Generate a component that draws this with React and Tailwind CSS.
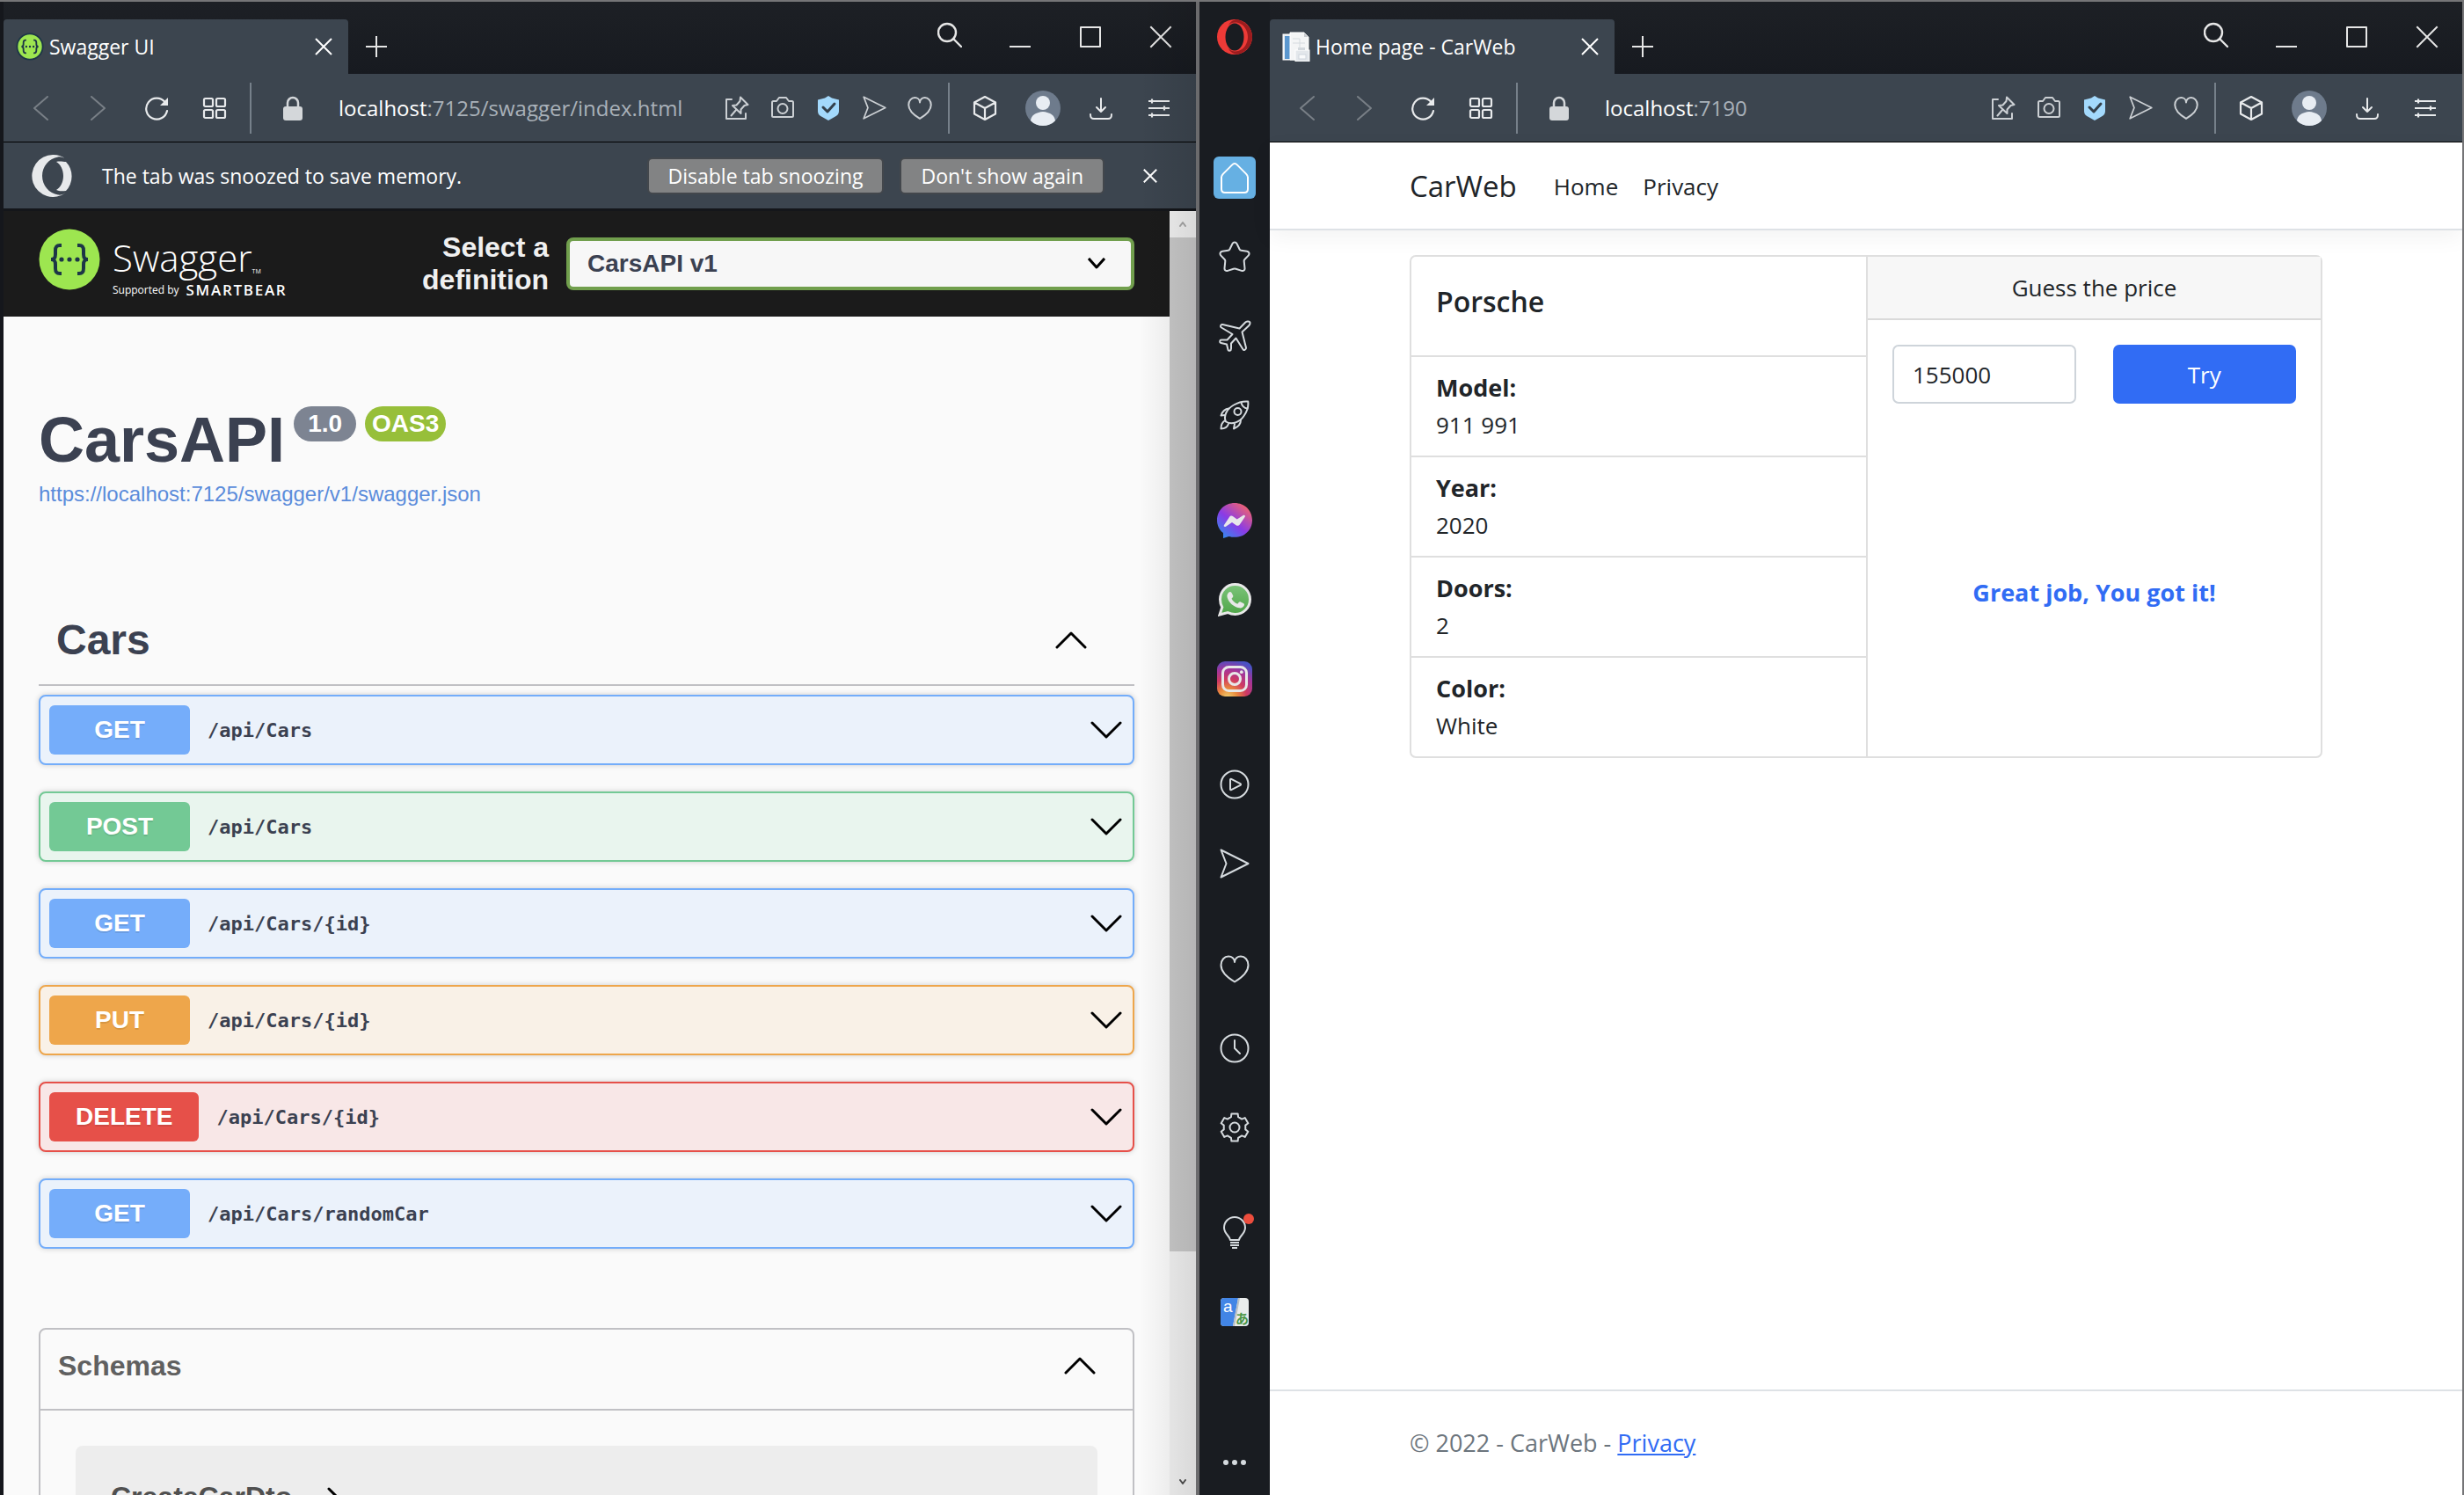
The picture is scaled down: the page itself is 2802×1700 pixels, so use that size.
import React from "react";

const UI = "font-['Open_Sans','Noto_Sans',sans-serif]";
const ARIAL = "font-['Liberation_Sans',Arial,sans-serif]";

function Svg({ w, h, vb, children, sw = 2, stroke = "currentColor", fill = "none" }) {
  return (
    <svg
      width={w}
      height={h || w}
      viewBox={vb || `0 0 ${w} ${h || w}`}
      fill={fill}
      stroke={stroke}
      strokeWidth={sw}
      strokeLinecap="round"
      strokeLinejoin="round"
      aria-hidden="true"
      className="shrink-0"
    >
      {children}
    </svg>
  );
}

/* ---------- shared drawings ---------- */

const Cross = ({ size = 20, sw = 2 }) => (
  <Svg w={size} vb="0 0 20 20" sw={sw}>
    <path d="M1 1l18 18M19 1L1 19" strokeLinecap="butt" />
  </Svg>
);

const SwaggerMark = ({ size, ring }) => (
  <svg width={size} height={size} viewBox="0 0 70 70" aria-hidden="true" className="shrink-0">
    <circle cx="35" cy="35" r={ring ? 32 : 34.5} fill="#9de650" stroke="#1d3647" strokeWidth={ring ? 4 : 0} />
    <g fill="none" stroke="#1d3647" strokeWidth="4">
      <path d="M26 19h-2c-4 0-5 2-5 6v4c0 4-1 6-5 6 4 0 5 2 5 6v4c0 4 1 6 5 6h2" />
      <path d="M44 19h2c4 0 5 2 5 6v4c0 4 1 6 5 6-4 0-5 2-5 6v4c0 4-1 6-5 6h-2" />
    </g>
    <g fill="#1d3647">
      <circle cx="26" cy="35" r="2.6" />
      <circle cx="35" cy="35" r="2.6" />
      <circle cx="44" cy="35" r="2.6" />
    </g>
  </svg>
);

const PageIcon = () => (
  <svg width="32" height="34" viewBox="0 0 32 34" aria-hidden="true" className="shrink-0">
    <rect x="1" y="3" width="18" height="29" fill="#e9eef3" stroke="#fff" />
    <rect x="3" y="5" width="6" height="26" fill="#5b97cf" />
    <path d="M9 1h16l5 5v26H9z" fill="#f4f5f6" stroke="#fff" />
    <path d="M25 1v5h5" fill="#c9ccd0" />
    <path d="M12 8h8M12 13h14M20 8v18" stroke="#d5dadf" fill="none" />
    <rect x="15" y="21" width="16" height="13" fill="#e3e7eb" stroke="#fff" />
    <rect x="18" y="18" width="8" height="3" fill="#d3d8dd" />
    <rect x="19" y="26" width="8" height="5" fill="#f9fafb" stroke="#cfd6dd" />
  </svg>
);

const Send = ({ size = 28, sw = 2 }) => (
  <Svg w={size} vb="0 0 34 34" sw={sw}>
    <path d="M1.500 1.500L32.500 17 1.500 32.500 7.500 17z" />
  </Svg>
);

const Heart = ({ size = 28, sw = 2 }) => (
  <Svg w={size} vb="0 0 34 34" sw={sw}>
    <path d="M17 31.500C12 28.500 1.500 21 1.500 12.500 1.500 6.500 5.500 2.500 10 2.500c3.600 0 7 2.300 7 6.500 0-4.200 3.400-6.500 7-6.500 4.500 0 8.500 4 8.500 10C32.500 21 22 28.500 17 31.500z" />
  </Svg>
);

const Chevron = ({ up }) => (
  <Svg w={36} h={20} sw={3} stroke="#000">
    <path d={up ? "M2 18L18 2 34 18" : "M2 2L18 18 34 2"} />
  </Svg>
);

/* ---------- browser chrome ---------- */

function WindowButtons() {
  const cls = "flex h-full w-20 items-center justify-center";
  return (
    <div className="flex h-20 text-[#e6e6e6]">
      <button aria-label="Search tabs" className={cls}>
        <Svg w={28} h={34} sw={2.4}>
          <circle cx="11" cy="12" r="10" />
          <path d="M18 19l9 9" />
        </Svg>
      </button>
      <button aria-label="Minimize" className={cls}>
        <Svg w={24}><path d="M0 23h24" strokeLinecap="butt" /></Svg>
      </button>
      <button aria-label="Maximize" className={cls}>
        <Svg w={24}><rect x="1" y="1" width="22" height="22" /></Svg>
      </button>
      <button aria-label="Close window" className={cls}><Cross size={26} sw={1.5} /></button>
    </div>
  );
}

function TitleBar({ icon, title }) {
  return (
    <div className="flex h-[82px] justify-between bg-linear-to-b from-[#1d2025] to-[#171a20]">
      <div className="flex pt-5">
        <div className={`flex w-[392px] items-center rounded-t-sm bg-[#3c454f] pl-[14px] pr-[18px] text-[23px] text-white ${UI}`}>
          {icon}
          <span className="ml-[6px] flex-1 whitespace-nowrap">{title}</span>
          <button aria-label="Close tab"><Cross size={20} /></button>
        </div>
        <button aria-label="New tab" className="flex w-16 items-center justify-center text-[#e6e6e6]">
          <Svg w={24}><path d="M12 0v24M0 12h24" strokeLinecap="butt" /></Svg>
        </button>
      </div>
      <WindowButtons />
    </div>
  );
}

function Tool({ label, small, dim, children }) {
  return (
    <button
      aria-label={label}
      className={`flex h-full items-center justify-center ${small ? "w-[52px] text-[#ccd0d4]" : "w-[66px] text-[#e8eaec]"} ${dim ? "opacity-35" : ""}`}
    >
      {children}
    </button>
  );
}

function Toolbar({ host, rest }) {
  return (
    <div className="flex h-[78px] items-center border-b border-black bg-[#3c454f] px-[9px]">
      <Tool label="Back" dim>
        <Svg w={18} h={28}><path d="M17 1L2 14l15 13" /></Svg>
      </Tool>
      <Tool label="Forward" dim>
        <Svg w={18} h={28}><path d="M1 1l15 13L1 27" /></Svg>
      </Tool>
      <Tool label="Reload">
        <Svg w={28} sw={2.2}>
          <path d="M23.500 7A12 12 0 1 0 26 17" />
          <path d="M27 2v9h-9z" fill="currentColor" stroke="none" />
        </Svg>
      </Tool>
      <Tool label="Speed dial">
        <Svg w={28} sw={2.2}>
          <rect x="2" y="3" width="10" height="9" rx="1.500" />
          <rect x="16" y="3" width="10" height="9" rx="1.500" />
          <rect x="2" y="16" width="10" height="9" rx="1.500" />
          <rect x="16" y="16" width="10" height="9" rx="1.500" />
        </Svg>
      </Tool>
      <span className="mx-[7px] h-[58px] w-[2px] bg-[#76808a]" />
      <span className="ml-6 text-[#d4d7da]">
        <Svg w={32} h={28}>
          <path d="M10 13V8a6 6 0 0 1 12 0v5" strokeWidth="2.500" />
          <rect x="5" y="12" width="22" height="16" rx="3" fill="currentColor" stroke="none" />
        </Svg>
      </span>
      <div className={`ml-9 flex-1 whitespace-nowrap text-2xl text-[#a9b1b9] ${UI}`}>
        <span className="text-white">{host}</span>{rest}
      </div>
      <Tool label="Pin page" small>
        <Svg w={28}>
          <path d="M8 4H2v22h22v-6" />
          <path d="M18 1.500l8.500 8.500-4 1-4 4.500v4.500l-9.500-9 4.500-.5 4-4.500zM13.500 15.500l-6 7" />
        </Svg>
      </Tool>
      <Tool label="Snapshot" small>
        <Svg w={28}>
          <path d="M3.500 6H7l3-4h8l3 4h3.500c1 0 1.500.5 1.500 1.500v15c0 1-.5 1.500-1.500 1.500h-21c-1 0-1.500-.5-1.500-1.500v-15C2 6.500 2.500 6 3.500 6z" />
          <circle cx="14" cy="14.500" r="5.500" />
        </Svg>
      </Tool>
      <Tool label="Ad blocker" small>
        <Svg w={28}>
          <path d="M14 0l4 2.500 8 2V17c0 3-1 5-5 7l-7 4-7-4c-4-2-5-4-5-7V4.500l8-2z" fill="#a3d9fc" stroke="none" />
          <path d="M8 13l5 5 8-9" stroke="#34404b" strokeWidth="3" />
        </Svg>
      </Tool>
      <Tool label="My Flow" small><Send size={27} sw={2.2} /></Tool>
      <Tool label="Bookmark" small><Heart size={28} sw={2.4} /></Tool>
      <span className="ml-[6px] mr-[7px] h-[58px] w-[2px] bg-[#76808a]" />
      <Tool label="Extensions">
        <Svg w={28} sw={2.2}>
          <path d="M14 1l12 6.500v13L14 27 2 20.500v-13zM2 7.500L14 14l12-6.500M14 14v13" />
        </Svg>
      </Tool>
      <Tool label="Profile">
        <svg width="40" height="40" viewBox="0 0 40 40" aria-hidden="true">
          <clipPath id="face"><circle cx="20" cy="20" r="20" /></clipPath>
          <circle cx="20" cy="20" r="20" fill="#6e7b8c" />
          <g clipPath="url(#face)" fill="#e8edf3">
            <circle cx="20" cy="14" r="8" />
            <path d="M6 34c1-6 5-8 9-9 3-1.500 7-1.500 10 0 4 1 8 3 9 9l-4 6H10z" />
          </g>
        </svg>
      </Tool>
      <Tool label="Downloads">
        <Svg w={28}>
          <path d="M14 3v15M9 13l5 5 5-5M2 21c0 4 1 5 4 5h16c3 0 4-1 4-5" />
        </Svg>
      </Tool>
      <Tool label="Easy setup">
        <Svg w={26} sw={2.2}>
          <path d="M1 5h24M1 13h24M1 21h24M5 2.500v5M19 10.500v5M5 18.500v5" strokeLinecap="butt" />
        </Svg>
      </Tool>
    </div>
  );
}

/* ---------- sidebar ---------- */

const gearPath = (() => {
  const pts = [];
  for (let k = 0; k < 6; k++) {
    const c = -90 + k * 60;
    [[-19, 12.5], [-13, 16], [13, 16], [19, 12.5]].forEach(([d, r]) => {
      const a = ((c + d) * Math.PI) / 180;
      pts.push(`${(18 + r * Math.cos(a)).toFixed(2)} ${(18 + r * Math.sin(a)).toFixed(2)}`);
    });
  }
  return `M${pts.join("L")}z`;
})();

const sideGroups = [
  [
    ["Start page", (
      <span className="flex size-12 items-center justify-center rounded-md bg-[#66b0e3] text-white">
        <Svg w={34} h={36} sw={2}>
          <path d="M17 2c1 0 2 .6 3 1.600l10 10c1.300 1.300 2 2.400 2 4V31c0 2.400-1.600 4-4 4H6c-2.400 0-4-1.600-4-4V17.600c0-1.600.7-2.700 2-4l10-10C15 2.600 16 2 17 2z" />
        </Svg>
      </span>
    )],
    ["Bookmarks", (
      <Svg w={36}>
        <path d="M18 1.500c1.200 0 2 .6 2.600 1.700l3 6.300c.4.800 1 1.200 1.800 1.300l6.600 1c2.500.4 3.300 3 1.600 4.800L29.400 21c-.6.600-.8 1.300-.7 2.100l.8 7.900c.2 2.300-1.600 3.600-3.600 2.900l-6.500-2.200c-1-.3-1.800-.3-2.800 0l-6.500 2.200c-2 .7-3.800-.6-3.600-2.900l.8-7.900c.1-.8-.1-1.500-.7-2.100l-4.200-4.400C.7 14.800 1.500 12.200 4 11.800l6.600-1c.8-.1 1.400-.5 1.800-1.300l3-6.300c.6-1.100 1.400-1.700 2.600-1.700z" />
      </Svg>
    )],
    ["Travel", (
      <Svg w={38} vb="-1 -1 38 38">
        <path d="M23.500 9.500L30 2.800C31.500 1.300 34 1 35 2 36 3 35.600 5 34 6.500L26.500 13.500 31 31.500C31.300 33.300 28.500 35 27.500 33.300L19.500 20.500 14 26.500 14 32.500C14 35 11 35.700 10.500 33.700L9 27.500 2.500 26C.5 25.500.8 22.500 3 22.500L9.500 22.500 15.500 16 3 8.500C1 7.300 2.300 4.500 4.300 5z" />
      </Svg>
    )],
    ["Explore", (
      <Svg w={34}>
        <path d="M7 24.500C4 18 8 10 16 5.500 21 2.500 27 1 32.200 1.500 33 7 31 13 27.500 18 23 25 14 28.500 7 24.500z" />
        <circle cx="20.500" cy="13" r="4" />
        <path d="M24.500 3C25.500 7 28 9 31.500 9.500M10.500 9.500C6 10 3 13 1.500 17.500L6 17M24 22.500C24 27 21 30.500 16 32.500L17 27M5.500 23.500C2.500 25.500 1.500 29 1.500 32.500 5 32.500 8.500 31.500 10 27" />
      </Svg>
    )],
  ],
  [
    ["Messenger", (
      <svg width="40" height="40" viewBox="0 0 40 40" aria-hidden="true">
        <defs>
          <linearGradient id="msg" x1="0" y1="1" x2="0.800" y2="0">
            <stop offset="0" stopColor="#1f9bf0" />
            <stop offset=".5" stopColor="#8a3be6" />
            <stop offset="1" stopColor="#f5656a" />
          </linearGradient>
        </defs>
        <path d="M20 0c11.400 0 20 8.300 20 19.400S31.400 38.800 20 38.800c-2.500 0-4.500-.4-6.500-.9L7 40v-6C2.600 30.500 0 25.400 0 19.400 0 8.300 8.600 0 20 0z" fill="url(#msg)" />
        <path d="M8 25l6-9c1-1.500 2.800-1.800 4.200-.8l4.500 3.400 7-4.600c1.500-.8 2.800.4 2 1.800l-5.900 8.600c-1 1.500-2.800 1.800-4.200.8L17 22l-7 4.700c-1.500.8-2.900-.3-2-1.700z" fill="#e8e8ea" />
      </svg>
    )],
    ["WhatsApp", (
      <svg width="38" height="38" viewBox="0 0 38 38" aria-hidden="true">
        <defs>
          <linearGradient id="wa" x1="0" y1="0" x2="0" y2="1">
            <stop offset="0" stopColor="#7cc47a" />
            <stop offset="1" stopColor="#4fa548" />
          </linearGradient>
        </defs>
        <path d="M19.500 1.500C29 1.500 36.500 9 36.500 18.500S29 35.500 19.500 35.500c-3 0-6-.8-8.300-2L2 36l2.800-8.500c-1.500-2.700-2.300-5.700-2.300-9C2.500 9 10 1.500 19.500 1.500z" fill="url(#wa)" stroke="#e8e8e8" strokeWidth="3" />
        <path d="M12.500 10.500c.8-.8 2.400-.7 3 .4l1.700 3.400c.3.8.1 1.400-.4 2l-1.300 1.500c1.500 2.800 3.700 4.700 6.800 6l1.600-2c.5-.6 1.200-.7 1.900-.4l3.200 1.600c1 .5 1.200 1.300.9 2.300-.8 2.300-3.300 3.500-5.700 3-6.500-1.400-11.600-5.600-13.500-11.800-.8-2.400.1-4.500 1.800-6z" fill="#e8e8e8" />
      </svg>
    )],
    ["Instagram", (
      <svg width="40" height="40" viewBox="0 0 40 40" aria-hidden="true">
        <defs>
          <radialGradient id="ig" cx=".3" cy="1.050" r="1.100">
            <stop offset="0" stopColor="#efd574" />
            <stop offset=".25" stopColor="#ea8a3c" />
            <stop offset=".5" stopColor="#cf3a62" />
            <stop offset=".75" stopColor="#a3359a" />
            <stop offset="1" stopColor="#4a52c4" />
          </radialGradient>
        </defs>
        <rect width="40" height="40" rx="9" fill="url(#ig)" />
        <g fill="none" stroke="#e8e8e8" strokeWidth="3">
          <rect x="6.500" y="6.500" width="27" height="27" rx="7" />
          <circle cx="20" cy="20" r="6.500" />
        </g>
        <circle cx="27.800" cy="12.200" r="1.900" fill="#e8e8e8" />
      </svg>
    )],
  ],
  [
    ["Player", (
      <Svg w={34}>
        <circle cx="17" cy="17" r="15.500" />
        <path d="M12 11.500v11c0 .7.600 1 1.200.7l10.300-5.400c.7-.4.700-1.200 0-1.600l-10.300-5.400c-.6-.3-1.200 0-1.200.7z" />
      </Svg>
    )],
    ["My Flow", <Send size={34} sw={2} />],
  ],
  [
    ["Favorites", <Heart size={34} sw={2} />],
    ["History", (
      <Svg w={34}>
        <circle cx="17" cy="17" r="15.500" />
        <path d="M17 8v9l6 6" />
      </Svg>
    )],
    ["Settings", (
      <Svg w={36}>
        <path d={gearPath} />
        <circle cx="18" cy="18" r="5.500" />
      </Svg>
    )],
  ],
  [
    ["Tips", (
      <svg width="44" height="44" viewBox="0 0 44 44" fill="none" stroke="currentColor" strokeWidth="2" aria-hidden="true">
        <path d="M17 30c0-4-7-7-7-14a12 12 0 0 1 24 0c0 7-7 10-7 14z" strokeLinejoin="round" />
        <path d="M17 33h10M17 36h10M19 39h6" />
        <circle cx="38" cy="6" r="6" fill="#ed4d3d" stroke="none" />
      </svg>
    )],
    ["Translate", (
      <span className="relative flex size-8 overflow-hidden rounded-[4px] bg-[#e9ecec]">
        <svg width="32" height="32" viewBox="0 0 32 32" aria-hidden="true">
          <path d="M0 0h20l-6 32H0z" fill="#4285e6" />
          <path d="M20 0l-6 32h2l6-32z" fill="#b9bfc4" />
        </svg>
        <span className="absolute left-[3px] top-0 text-[19px] leading-[20px] text-white font-['Liberation_Sans',sans-serif]">a</span>
        <span className="absolute bottom-0 right-0 text-[15px] font-bold leading-[18px] text-[#4a9546] font-['Noto_Sans_CJK_JP',sans-serif]">あ</span>
      </span>
    )],
  ],
];

function Sidebar() {
  return (
    <nav aria-label="Sidebar" className="flex w-20 shrink-0 flex-col items-center bg-[#191c21] text-[#d5dade]">
      <button aria-label="Opera menu" className="mb-[95px] mt-5 size-10">
        <svg width="40" height="40" viewBox="0 0 40 40" aria-hidden="true">
          <circle cx="20" cy="20" r="20" fill="#ee3a37" />
          <path d="M13 7c3-3.500 7-4 11-3 7 2 11 9 11 16s-4 14-11 16c-4 1-8 .5-11-3 2 5 8 8 13 6 8-3 14-10 14-19S34 4 26 1C21-1 15 2 13 7z" fill="#9c1c1e" />
          <ellipse cx="20" cy="20" rx="10.500" ry="15.500" fill="#191c21" />
        </svg>
      </button>
      <div className="flex flex-col gap-[30px]">
        {sideGroups.map((group, i) => (
          <div key={i} className="flex flex-col">
            {group.map(([label, icon]) => (
              <button key={label} aria-label={label} className="flex h-[90px] w-20 items-center justify-center">
                {icon}
              </button>
            ))}
          </div>
        ))}
      </div>
      <button aria-label="More" className="mb-[34px] mt-auto flex gap-1">
        <span className="size-[6px] rounded-full bg-current" />
        <span className="size-[6px] rounded-full bg-current" />
        <span className="size-[6px] rounded-full bg-current" />
      </button>
    </nav>
  );
}

/* ---------- left window: API docs ---------- */

const tones = {
  GET: ["border-[#73adfa] bg-[#ebf2fb]", "bg-[#75adfa]"],
  POST: ["border-[#73c995] bg-[#e9f5ee]", "bg-[#73c995]"],
  PUT: ["border-[#eea64b] bg-[#f9f1e7]", "bg-[#eea64b]"],
  DELETE: ["border-[#e65049] bg-[#f8e7e7]", "bg-[#e65049]"],
};

const operations = [
  ["GET", "/api/Cars"],
  ["POST", "/api/Cars"],
  ["GET", "/api/Cars/{id}"],
  ["PUT", "/api/Cars/{id}"],
  ["DELETE", "/api/Cars/{id}"],
  ["GET", "/api/Cars/randomCar"],
];

function Operation({ method, path }) {
  const [box, badge] = tones[method];
  return (
    <button className={`flex h-20 w-full items-center rounded-lg border-2 pl-[10px] pr-3 shadow-[0_0_6px_rgba(0,0,0,0.19)] ${box}`}>
      <span className={`flex h-14 min-w-[160px] items-center justify-center rounded-md px-[30px] text-[28px] font-bold text-white [text-shadow:0_2px_0_rgba(0,0,0,0.1)] ${badge}`}>
        {method}
      </span>
      <span className="ml-5 flex-1 text-left text-[22px] font-bold text-[#3b4151] font-['DejaVu_Sans_Mono',monospace]">{path}</span>
      <Chevron />
    </button>
  );
}

function SnoozeBar() {
  const btn = "h-[42px] rounded-md border-2 border-[#43474c] bg-[#828384] px-[22px] leading-[38px]";
  return (
    <div className={`flex h-[78px] shrink-0 items-center border-b-3 border-[#14161a] bg-[#3c454f] pl-8 pr-11 text-[23px] text-white ${UI}`}>
      <svg width="48" height="48" viewBox="0 0 48 48" aria-hidden="true">
        <path d="M24 0a24 24 0 1 0 15 43c-3 2-6 3-9 2.500C20 44 12 35 12 24S20 4 30 2.500c3-.5 6 .5 9 2.500A24 24 0 0 0 24 0z" fill="#e7e9eb" />
        <path d="M28 8c4-1 8 0 11 0a24 24 0 0 1 0 33c-3 0-7 1-11-1 5-3 8-9 8-16s-3-13-8-16z" fill="#e7e9eb" />
      </svg>
      <span className="ml-8 flex-1 whitespace-nowrap pt-[2px]">The tab was snoozed to save memory.</span>
      <button className={btn}>Disable tab snoozing</button>
      <button className={`ml-[18px] ${btn}`}>Don't show again</button>
      <button aria-label="Dismiss" className="ml-11"><Cross size={16} sw={2.5} /></button>
    </div>
  );
}

function SwaggerTopBar() {
  return (
    <header className="flex h-[120px] shrink-0 items-center bg-[#1b1b1b] px-10 text-white">
      <a href="#top" className="flex h-20 items-start">
        <SwaggerMark size={70} />
        <span className={`ml-[14px] flex flex-col ${UI}`}>
          <span className="flex items-end pt-[6px]">
            <span className="text-[42px] font-light leading-[54px]">Swagger</span>
            <span className="text-[7px] leading-[22px]">TM</span>
          </span>
          <span className="flex items-center gap-2 whitespace-nowrap leading-5">
            <span className="text-[12px]">Supported by</span>
            <span className="text-[17px] font-semibold tracking-widest">SMARTBEAR</span>
          </span>
        </span>
      </a>
      <div className={`ml-auto flex items-center ${ARIAL}`}>
        <label htmlFor="definition" className="w-[180px] text-right text-[32px] font-bold leading-[37px] text-[#f0f0f0]">
          Select a definition
        </label>
        <span className="relative ml-5 flex w-[646px] items-center">
          <select
            id="definition"
            defaultValue="v1"
            className="h-[60px] w-full appearance-none rounded-lg border-4 border-[#719f4d] bg-[#f7f7f7] pl-5 text-[28px] font-bold text-[#3b4151]"
          >
            <option value="v1">CarsAPI v1</option>
          </select>
          <span className="pointer-events-none absolute right-8">
            <Svg w={22} h={14} sw={3} stroke="#000"><path d="M3 2l8 9 8-9" strokeLinecap="square" /></Svg>
          </span>
        </span>
      </div>
    </header>
  );
}

function ScrollBar() {
  return (
    <div className="flex w-[30px] shrink-0 flex-col bg-[#f1f1f1]">
      <span className="flex h-[30px] items-center justify-center">
        <Svg w={8} h={6} stroke="#a8a8a8"><path d="M1 5l3-4 3 4" /></Svg>
      </span>
      <span className="basis-[79%] bg-[#c9c9c9]" />
      <span className="mt-auto flex h-[30px] items-center justify-center">
        <Svg w={8} h={6} stroke="#505050"><path d="M1 1l3 4 3-4" /></Svg>
      </span>
    </div>
  );
}

function ApiDocs() {
  return (
    <div className={`flex min-h-0 flex-1 ${ARIAL}`}>
      <div className="flex min-w-0 flex-1 flex-col overflow-hidden bg-[#fafafa] text-[#3b4151]">
        <SwaggerTopBar />
        <main className="px-10">
          <div className="flex items-start pt-[98px]">
            <h1 className="text-7xl font-bold leading-[84px]">CarsAPI</h1>
            <span className="ml-[10px] mt-1 rounded-[20px] bg-[#7d8492] px-4 text-[28px] font-bold leading-10 text-white">1.0</span>
            <span className="ml-[10px] mt-1 rounded-[20px] bg-[#97bf3a] px-2 text-[28px] font-bold leading-10 text-white">OAS3</span>
          </div>
          <a href="#spec" className="mt-[6px] block text-2xl leading-7 text-[#5b8cdb]">
            https://localhost:7125/swagger/v1/swagger.json
          </a>

          <section className="mt-[104px]">
            <button className="flex h-[100px] w-full items-center justify-between border-b-2 border-[#c0c0c4] pb-[3px] pl-5 pr-[54px]">
              <span className="text-5xl font-bold">Cars</span>
              <Chevron up />
            </button>
            <div className="mt-[10px] flex flex-col gap-[30px]">
              {operations.map(([method, path], i) => (
                <Operation key={i} method={method} path={path} />
              ))}
            </div>
          </section>

          <section className="mt-[90px] rounded-lg border-2 border-[#c0c0c4]">
            <button className="flex h-[92px] w-full items-center justify-between border-b-2 border-[#c0c0c4] pb-2 pl-5 pr-[42px]">
              <span className="text-[32px] font-bold text-[#606060]">Schemas</span>
              <Chevron up />
            </button>
            <div className="m-10 rounded-lg bg-[#ededed] px-10 py-8">
              <button className="flex items-center gap-10 text-[32px] font-bold leading-[52px] text-[#505050]">
                CreateCarDto
                <Svg w={14} h={22} sw={3} stroke="#000"><path d="M2 2l9 9-9 9" /></Svg>
              </button>
            </div>
          </section>
        </main>
      </div>
      <ScrollBar />
    </div>
  );
}

/* ---------- right window: car page ---------- */

const specs = [
  ["Model:", "911 991"],
  ["Year:", "2020"],
  ["Doors:", "2"],
  ["Color:", "White"],
];

function CarPage() {
  return (
    <div className={`flex min-h-0 flex-1 flex-col bg-white text-[26px] leading-[42px] text-[#212529] ${UI}`}>
      <header className="h-[100px] shrink-0 border-b-2 border-[#dee2e6] shadow-[0_8px_24px_rgba(0,0,0,0.05)]">
        <nav className="mx-auto flex h-full max-w-[1038px] items-center pt-[2px]">
          <a href="#brand" className="text-[33px]">CarWeb</a>
          <a href="#home" className="ml-[42px]">Home</a>
          <a href="#privacy" className="ml-7">Privacy</a>
        </nav>
      </header>
      <main className="mx-auto mt-7 w-full max-w-[1038px]">
        <div className="grid grid-cols-2 rounded-[7px] border-2 border-[#dfdfdf]">
          <section>
            <h5 className="h-28 pl-7 pt-[30px] text-[32px] font-semibold">Porsche</h5>
            <dl>
              {specs.map(([name, value]) => (
                <div key={name} className="border-t-2 border-[#dfdfdf] px-7 py-[14px]">
                  <dt className="text-[27px] font-bold">{name}</dt>
                  <dd>{value}</dd>
                </div>
              ))}
            </dl>
          </section>
          <section className="flex flex-col border-l-2 border-[#dfdfdf]">
            <h2 className="border-b-2 border-[#dadada] bg-[#f7f7f7] py-[14px] text-center">Guess the price</h2>
            <form className="grid grid-cols-2 gap-[42px] px-7 pt-7" onSubmit={(e) => e.preventDefault()}>
              <input
                aria-label="Price"
                defaultValue="155000"
                className="h-[67px] w-full min-w-0 rounded-[7px] border-2 border-[#ced4da] px-[21px]"
              />
              <button className="h-[67px] rounded-[7px] bg-[#316cf4] text-white">Try</button>
            </form>
            <p className="flex flex-1 items-center justify-center pt-7 text-[27px] font-bold text-[#316cf4]">
              Great job, You got it!
            </p>
          </section>
        </div>
      </main>
      <footer className="mt-auto border-t-2 border-[#dee2e6] text-[27px] leading-[118px] text-[#6c757d]">
        <div className="mx-auto max-w-[1038px]">
          © 2022 - CarWeb - <a href="#privacy" className="text-[#316cf4] underline">Privacy</a>
        </div>
      </footer>
    </div>
  );
}

export default function App() {
  return (
    <div className="flex h-screen overflow-hidden border-r-2 border-t-2 border-[#757577] bg-[#15171c]">
      <div className="relative ml-1 flex min-w-0 flex-1 flex-col">
        <TitleBar icon={<span className="flex w-8"><SwaggerMark size={32} ring /></span>} title="Swagger UI" />
        <Toolbar host="localhost" rest=":7125/swagger/index.html" />
        <SnoozeBar />
        <ApiDocs />
        <div className="pointer-events-none absolute inset-y-0 right-0 w-16 bg-linear-to-r from-transparent to-black/10" />
      </div>
      <div className="w-1 shrink-0 bg-[#6b6b6d]" />
      <Sidebar />
      <div className="flex min-w-0 flex-1 flex-col">
        <TitleBar icon={<PageIcon />} title="Home page - CarWeb" />
        <Toolbar host="localhost" rest=":7190" />
        <CarPage />
      </div>
    </div>
  );
}
